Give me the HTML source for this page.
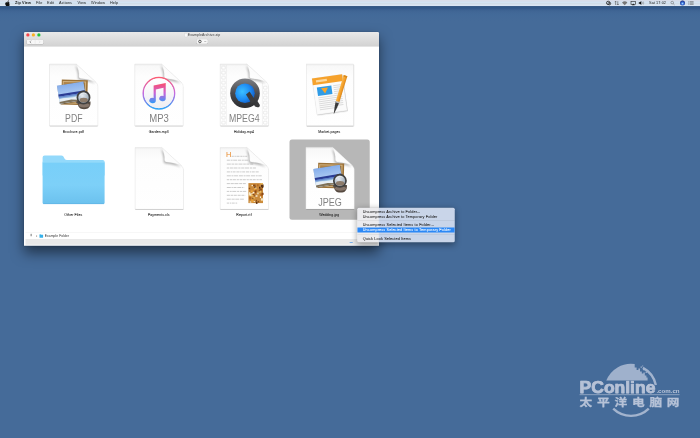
<!DOCTYPE html>
<html lang="en">
<head>
<meta charset="utf-8">
<title>Zip View</title>
<style>
html,body{margin:0;padding:0;width:700px;height:438px;overflow:hidden;background:#456b99;}
body{font-family:"Liberation Sans","Noto Sans CJK SC",sans-serif;}
#stage{position:absolute;left:0;top:0;width:2800px;height:1752px;transform:scale(.25);transform-origin:0 0;overflow:hidden;
 background:linear-gradient(#3a5b87 0px,#3a5b87 25px,#305786 29px,#34598a 34px,#3c6191 39px,#416796 47px,#436a99 60px,#456b99 84px,#456b99 100%);}
/* menu bar */
#menubar{position:absolute;left:0;top:0;width:2800px;height:24px;background:linear-gradient(#d9dde9 0,#d9dde9 3px,#d3e0ee 7px,#d4e3f2 10px,#d1dde8 14px,#d7e1ed 18px,#dae5f3 22px,#dae5f3 24px);}
#menubar span{position:absolute;top:0;line-height:23.5px;font-size:15.3px;letter-spacing:.3px;color:#222;white-space:nowrap;}
/* window */
#win{position:absolute;left:96px;top:128px;width:1420px;height:855px;background:#fff;border-radius:6px 6px 0 0;
 box-shadow:0 26px 50px rgba(0,0,0,.5),0 0 6px rgba(0,0,0,.3);overflow:hidden;}
#tb{position:absolute;left:0;top:0;width:100%;height:58px;background:linear-gradient(#e9e9e9,#d2d2d2);border-bottom:1px solid #b4b4b4;box-sizing:border-box;}
.tl{position:absolute;top:5px;width:13px;height:13px;border-radius:50%;}
#title{position:absolute;left:10px;top:3px;width:100%;text-align:center;font-size:14.2px;letter-spacing:.3px;color:#444;line-height:18px;}
.btn{position:absolute;background:#f7f7f7;border-radius:5px;box-shadow:0 0 0 1px rgba(0,0,0,.12),0 1px 1px rgba(0,0,0,.2);}
#pathbar{position:absolute;left:6px;top:801px;width:1408px;height:28px;background:#fff;border-top:1px solid #dcdcdc;box-sizing:border-box;font-size:13.3px;letter-spacing:.3px;color:#333;}
#status{position:absolute;left:6px;top:829px;width:1408px;height:22px;background:#e9e9e9;border-top:1px solid #d6d6d6;box-sizing:border-box;}
.lbl{position:absolute;width:320px;text-align:center;font-size:13.8px;letter-spacing:.4px;line-height:16px;color:#111;-webkit-text-stroke:.15px #111;white-space:nowrap;}
.sel{position:absolute;left:1062px;top:430px;width:321px;height:321px;background:#b7b7b7;border-radius:10px;}
#art{position:absolute;left:0;top:0;width:2800px;height:1752px;}
#art text{font-family:"Liberation Sans",sans-serif;}
/* context menu */
#menu{position:absolute;left:1429px;top:831px;width:390px;height:138px;background:linear-gradient(90deg,#ebebee 0,#ebebee 84px,#c9d5e9 90px,#c9d5e9 100%);border-radius:6px;
 box-shadow:0 8px 24px rgba(0,0,0,.35),0 0 2px rgba(0,0,0,.4);overflow:hidden;font-size:15.3px;letter-spacing:.45px;color:#1a1a1a;-webkit-text-stroke:.15px #1a1a1a;}
#menu div.it{position:absolute;left:0;width:100%;height:19px;line-height:19px;padding-left:22px;box-sizing:border-box;white-space:nowrap;}
#menu div.sp{position:absolute;left:0;width:100%;height:2px;background:rgba(0,0,0,.10);}
#menu div.hi{background:#2b88f6;color:#fff;-webkit-text-stroke:.15px #fff;}
</style>
</head>
<body>
<div id="stage">
 <div id="menubar">
  <span style="left:60px;font-weight:bold">Zip View</span>
  <span style="left:144px">File</span>
  <span style="left:188px">Edit</span>
  <span style="left:236px">Actions</span>
  <span style="left:310px">View</span>
  <span style="left:364px">Window</span>
  <span style="left:440px">Help</span>
  <span style="left:2596px">Sat 17:02</span>
 </div>
 <div id="win">
  <div id="tb">
   <div class="tl" style="left:9px;background:#f5454a"></div>
   <div class="tl" style="left:31px;background:#fbb024"></div>
   <div class="tl" style="left:53px;background:#22c23a"></div>
   <div id="title">ExampleArchive.zip</div>
   <div class="btn" style="left:11px;top:31px;width:67px;height:17px"></div>
   <div class="btn" style="left:690px;top:29px;width:45px;height:18px"></div>
  </div>
  <div class="sel"></div>
  <div class="lbl" style="left:37px;top:391px">Brochure.pdf</div>
  <div class="lbl" style="left:379px;top:391px">Garden.mp3</div>
  <div class="lbl" style="left:720px;top:391px">Holiday.mp4</div>
  <div class="lbl" style="left:1061px;top:391px">Market.pages</div>
  <div class="lbl" style="left:37px;top:723px">Other Files</div>
  <div class="lbl" style="left:379px;top:723px">Payments.xls</div>
  <div class="lbl" style="left:720px;top:723px">Report.rtf</div>
  <div class="lbl" style="left:1061px;top:723px">Wedding.jpg</div>
  <div id="pathbar"><span style="position:absolute;left:77px;top:5px">Example Folder</span></div>
  <div id="status"></div>
 </div>
 <svg id="art" viewBox="0 0 700 438" width="2800" height="1752">
<defs>
<filter id="ol" x="-5%" y="-20%" width="110%" height="140%"><feMorphology in="SourceAlpha" operator="dilate" radius=".45" result="d"/><feFlood flood-color="#456b99"/><feComposite in2="d" operator="in" result="o"/><feMerge><feMergeNode in="o"/><feMergeNode in="SourceGraphic"/></feMerge></filter>
<radialGradient id="siri" cx=".5" cy=".6" r=".6"><stop offset="0" stop-color="#9ad4ff"/><stop offset=".45" stop-color="#3a6fd8"/><stop offset="1" stop-color="#14206e"/></radialGradient>
<filter id="b1" x="-20%" y="-20%" width="140%" height="140%"><feGaussianBlur stdDeviation=".7"/></filter>
<filter id="b2" x="-30%" y="-30%" width="160%" height="160%"><feGaussianBlur stdDeviation="1.1"/></filter>
<filter id="b3" x="-30%" y="-30%" width="160%" height="160%"><feGaussianBlur stdDeviation=".35"/></filter>
<linearGradient id="pg" x1="0" y1="0" x2="0" y2="1"><stop offset="0" stop-color="#ececec"/><stop offset=".035" stop-color="#f8f8f8"/><stop offset=".2" stop-color="#fdfdfd"/><stop offset="1" stop-color="#ffffff"/></linearGradient>
<linearGradient id="fl" x1=".1" y1=".9" x2=".7" y2=".2"><stop offset="0" stop-color="#ffffff"/><stop offset=".6" stop-color="#fcfcfc"/><stop offset="1" stop-color="#f0f0f0"/></linearGradient>
<linearGradient id="sky" x1="0" y1="0" x2="0" y2="1"><stop offset="0" stop-color="#86aeeb"/><stop offset=".45" stop-color="#a3c3f0"/><stop offset="1" stop-color="#c4dcf6"/></linearGradient>
<linearGradient id="sea" x1="0" y1="0" x2="0" y2="1"><stop offset="0" stop-color="#4c6fc0"/><stop offset=".5" stop-color="#a8cdea"/><stop offset="1" stop-color="#d4e8f4"/></linearGradient>
<radialGradient id="glass" cx=".4" cy=".35" r=".8"><stop offset="0" stop-color="#e6ecf2"/><stop offset=".6" stop-color="#aab6c2"/><stop offset="1" stop-color="#80868e"/></radialGradient>
<linearGradient id="itr" x1="0" y1="0" x2="0" y2="1"><stop offset="0" stop-color="#fb5c74"/><stop offset=".5" stop-color="#c56ce0"/><stop offset="1" stop-color="#2fa6f6"/></linearGradient>
<linearGradient id="iti" x1="0" y1="0" x2="0" y2="1"><stop offset="0" stop-color="#ffffff"/><stop offset="1" stop-color="#eeeef2"/></linearGradient>
<linearGradient id="itn" x1="0" y1="0" x2="0" y2="1"><stop offset="0" stop-color="#fb4d6a"/><stop offset=".5" stop-color="#c963d8"/><stop offset="1" stop-color="#2f9bf8"/></linearGradient>
<linearGradient id="qtr" x1="0" y1="0" x2="0" y2="1"><stop offset="0" stop-color="#7d7f84"/><stop offset=".5" stop-color="#4a4b4f"/><stop offset="1" stop-color="#2c2c2e"/></linearGradient>
<radialGradient id="qtb" cx=".36" cy=".42" r=".75"><stop offset="0" stop-color="#3cc0ff"/><stop offset=".55" stop-color="#1e8cf4"/><stop offset="1" stop-color="#0f4fb8"/></radialGradient>
<linearGradient id="pen" x1="0" y1="0" x2="1" y2="0"><stop offset="0" stop-color="#f9b548"/><stop offset=".5" stop-color="#f6a22c"/><stop offset="1" stop-color="#d9861a"/></linearGradient>
<linearGradient id="fd" x1="0" y1="0" x2="0" y2="1"><stop offset="0" stop-color="#78cff9"/><stop offset=".55" stop-color="#7dd0f8"/><stop offset="1" stop-color="#6bc1ee"/></linearGradient>
</defs>
<g transform="translate(49.5,64.0)">
<path d="M0,0 H26.6 L46.6,18.4 Q48.4,20.2 48.4,22.8 V61.8 H0 Z" fill="#000" opacity=".12" filter="url(#b1)" transform="translate(0,.5)"/>
<rect x="0.4" y="61.2" width="47.6" height="1.1" fill="#000" opacity=".22" filter="url(#b3)"/>
<path d="M0,0 H26.6 L46.6,18.4 Q48.4,20.2 48.4,22.8 V61.8 H0 Z" fill="url(#pg)" stroke="#dcdcdc" stroke-width=".35"/>
<path d="M26.6,0 C28.6,3.6 29.8,9 29.4,12.4 Q29.4,14.4 31.4,14.6 C36,15 42.6,16.2 46.6,18.4 Z" fill="#000" opacity=".30" filter="url(#b2)" transform="translate(-.9,1.5)"/>
<path d="M26.6,0 C28.6,3.6 29.8,9 29.4,12.4 Q29.4,14.4 31.4,14.6 C36,15 42.6,16.2 46.6,18.4 Z" fill="url(#fl)" stroke="#dadada" stroke-width=".25"/>
<text x="15.6" y="58.45" font-size="10.5" fill="#828282" textLength="17.4" lengthAdjust="spacingAndGlyphs">PDF</text>
</g>
<g transform="translate(49.5,64.0)">
<g transform="rotate(1.5 25 28)"><rect x="12" y="15.9" width="26" height="25" fill="#9c7238"/><rect x="13" y="17.2" width="23.4" height="22.4" fill="#d2b482"/><rect x="14" y="18.2" width="21.4" height="20.4" fill="#b08448"/></g>
<g transform="translate(7.4,21.7) rotate(-9.2)">
 <rect x=".3" y=".5" width="26.85" height="18.6" fill="#000" opacity=".4" filter="url(#b1)"/>
 <rect x="0" y="0" width="26.85" height="18.4" fill="url(#sky)"/>
 <rect x="0" y="9" width="26.85" height="2.3" fill="#2b3c94"/>
 <rect x="0" y="11.2" width="26.85" height="5" fill="url(#sea)"/>
 <path d="M0,13.8 C6,12.4 12,15.4 18,13.6 L26.85,13.2 V18.4 H0 Z" fill="#e6eef4"/>
 <path d="M0,16.6 L12,16 L24,18.4 H0 Z" fill="#7d7058"/>
</g>
<path d="M28.2,37.6 C27.8,42.8 30.2,45.3 34.6,45.3 C39,45.3 41.4,42.8 41,37.6 Z" fill="#564a40"/>
<ellipse cx="34.6" cy="41.2" rx="5.8" ry="2.2" fill="#85756a"/><path d="M26.6,38.6 L29,36.6 L30,38 L27.6,39.8 Z" fill="#4a4a4a"/>
<circle cx="34.0" cy="33.5" r="6.1" fill="url(#glass)" stroke="#414141" stroke-width="1.7"/>
<path d="M30.2,31.7 A4.4,4.4 0 0 1 37,30.1" stroke="#fff" stroke-width=".9" fill="none" opacity=".6"/>
<ellipse cx="34.2" cy="36" rx="4.1" ry="2.3" fill="#8a7460" opacity=".9"/>
</g>
<g transform="translate(134.8,64.0)">
<path d="M0,0 H26.6 L46.6,18.4 Q48.4,20.2 48.4,22.8 V61.8 H0 Z" fill="#000" opacity=".12" filter="url(#b1)" transform="translate(0,.5)"/>
<rect x="0.4" y="61.2" width="47.6" height="1.1" fill="#000" opacity=".22" filter="url(#b3)"/>
<path d="M0,0 H26.6 L46.6,18.4 Q48.4,20.2 48.4,22.8 V61.8 H0 Z" fill="url(#pg)" stroke="#dcdcdc" stroke-width=".35"/>
<path d="M26.6,0 C28.6,3.6 29.8,9 29.4,12.4 Q29.4,14.4 31.4,14.6 C36,15 42.6,16.2 46.6,18.4 Z" fill="#000" opacity=".30" filter="url(#b2)" transform="translate(-.9,1.5)"/>
<path d="M26.6,0 C28.6,3.6 29.8,9 29.4,12.4 Q29.4,14.4 31.4,14.6 C36,15 42.6,16.2 46.6,18.4 Z" fill="url(#fl)" stroke="#dadada" stroke-width=".25"/>
<text x="14.4" y="58.45" font-size="10.5" fill="#828282" textLength="19.6" lengthAdjust="spacingAndGlyphs">MP3</text>
</g>
<g transform="translate(134.8,64.0)">
<circle cx="24.1" cy="29.3" r="15.7" fill="#fff" stroke="url(#itr)" stroke-width="1.5"/>
<circle cx="24.1" cy="29.3" r="14.8" fill="url(#iti)"/>
<g transform="translate(24.1,29.3) scale(1.1) translate(-24.4,-28.6)"><path d="M19.6,21.6 L30.6,19.2 V33.4 A3,2.5 0 1 1 28.6,31 V23.6 L21.6,25.1 V35.2 A3,2.5 0 1 1 19.6,32.8 Z" fill="url(#itn)"/></g>
</g>
<g transform="translate(220.2,64.0)">
<path d="M0,0 H26.6 L46.6,18.4 Q48.4,20.2 48.4,22.8 V61.8 H0 Z" fill="#000" opacity=".12" filter="url(#b1)" transform="translate(0,.5)"/>
<rect x="0.4" y="61.2" width="47.6" height="1.1" fill="#000" opacity=".22" filter="url(#b3)"/>
<path d="M0,0 H26.6 L46.6,18.4 Q48.4,20.2 48.4,22.8 V61.8 H0 Z" fill="url(#pg)" stroke="#dcdcdc" stroke-width=".35"/>
<rect x="1.6" y="2.2" width="3.4" height="2.9" rx=".5" fill="#fff" stroke="#d2d2d2" stroke-width=".4"/>
<rect x="1.6" y="7.2" width="3.4" height="2.9" rx=".5" fill="#fff" stroke="#d2d2d2" stroke-width=".4"/>
<rect x="1.6" y="12.2" width="3.4" height="2.9" rx=".5" fill="#fff" stroke="#d2d2d2" stroke-width=".4"/>
<rect x="1.6" y="17.2" width="3.4" height="2.9" rx=".5" fill="#fff" stroke="#d2d2d2" stroke-width=".4"/>
<rect x="1.6" y="22.2" width="3.4" height="2.9" rx=".5" fill="#fff" stroke="#d2d2d2" stroke-width=".4"/>
<rect x="43.4" y="22.2" width="3.4" height="2.9" rx=".5" fill="#fff" stroke="#d2d2d2" stroke-width=".4"/>
<rect x="1.6" y="27.2" width="3.4" height="2.9" rx=".5" fill="#fff" stroke="#d2d2d2" stroke-width=".4"/>
<rect x="43.4" y="27.2" width="3.4" height="2.9" rx=".5" fill="#fff" stroke="#d2d2d2" stroke-width=".4"/>
<rect x="1.6" y="32.2" width="3.4" height="2.9" rx=".5" fill="#fff" stroke="#d2d2d2" stroke-width=".4"/>
<rect x="43.4" y="32.2" width="3.4" height="2.9" rx=".5" fill="#fff" stroke="#d2d2d2" stroke-width=".4"/>
<rect x="1.6" y="37.2" width="3.4" height="2.9" rx=".5" fill="#fff" stroke="#d2d2d2" stroke-width=".4"/>
<rect x="43.4" y="37.2" width="3.4" height="2.9" rx=".5" fill="#fff" stroke="#d2d2d2" stroke-width=".4"/>
<rect x="1.6" y="42.2" width="3.4" height="2.9" rx=".5" fill="#fff" stroke="#d2d2d2" stroke-width=".4"/>
<rect x="43.4" y="42.2" width="3.4" height="2.9" rx=".5" fill="#fff" stroke="#d2d2d2" stroke-width=".4"/>
<rect x="1.6" y="47.2" width="3.4" height="2.9" rx=".5" fill="#fff" stroke="#d2d2d2" stroke-width=".4"/>
<rect x="43.4" y="47.2" width="3.4" height="2.9" rx=".5" fill="#fff" stroke="#d2d2d2" stroke-width=".4"/>
<rect x="1.6" y="52.2" width="3.4" height="2.9" rx=".5" fill="#fff" stroke="#d2d2d2" stroke-width=".4"/>
<rect x="43.4" y="52.2" width="3.4" height="2.9" rx=".5" fill="#fff" stroke="#d2d2d2" stroke-width=".4"/>
<rect x="1.6" y="57.2" width="3.4" height="2.9" rx=".5" fill="#fff" stroke="#d2d2d2" stroke-width=".4"/>
<rect x="43.4" y="57.2" width="3.4" height="2.9" rx=".5" fill="#fff" stroke="#d2d2d2" stroke-width=".4"/>
<path d="M6.2,1 V61 M42.2,19 V61" stroke="#dcdcdc" stroke-width=".35" fill="none"/>
<path d="M26.6,0 C28.6,3.6 29.8,9 29.4,12.4 Q29.4,14.4 31.4,14.6 C36,15 42.6,16.2 46.6,18.4 Z" fill="#000" opacity=".30" filter="url(#b2)" transform="translate(-.9,1.5)"/>
<path d="M26.6,0 C28.6,3.6 29.8,9 29.4,12.4 Q29.4,14.4 31.4,14.6 C36,15 42.6,16.2 46.6,18.4 Z" fill="url(#fl)" stroke="#dadada" stroke-width=".25"/>
<text x="8.8" y="58.45" font-size="10.5" fill="#828282" textLength="30.6" lengthAdjust="spacingAndGlyphs">MPEG4</text>
</g>
<g transform="translate(221.0,64.0)">
<path d="M28,33 L31.6,29.6 L38.6,40.6 C39.4,42 38,43.6 36.4,43.2 L34,42.4 Z" fill="#3a3a3c"/>
<circle cx="24" cy="29.2" r="14.8" fill="url(#qtr)"/>
<circle cx="24" cy="29.2" r="9.8" fill="url(#qtb)"/>
<path d="M25,30.6 L28.6,27.4 L34.4,36.4 L30.6,39.4 Z" fill="#3c3c3e"/>
</g>
<g transform="translate(306.3,64.0)">
<rect x="0.3" y="0.8" width="47.6" height="61.6" fill="#000" opacity=".14" filter="url(#b1)"/>
<rect x="0.4" y="61.3" width="46.6" height="1.1" fill="#000" opacity=".25" filter="url(#b3)"/>
<rect x="0" y="0" width="47.3" height="61.8" fill="url(#pg)" stroke="#dedede" stroke-width=".35"/>
</g>
<g transform="translate(306.3,64.0)">
<g transform="translate(0,-.8) rotate(-8 24 31)">
 <rect x="8.4" y="13.6" width="30.4" height="36.6" fill="#000" opacity=".25" filter="url(#b1)"/>
 <rect x="8" y="13" width="30.4" height="36.4" fill="#fbfbfb" stroke="#dedede" stroke-width=".3"/>
 <rect x="8" y="13" width="30.4" height="6.6" fill="#f6a22c"/>
 <rect x="11.6" y="15.2" width="11" height="2.2" fill="#fbd9a0"/>
 <rect x="11.6" y="22.4" width="14.6" height="8.6" fill="#2f9be6"/>
 <path d="M15.6,23.8 L22.6,24 L19,29.6 Z" fill="#f7a52a"/>
 <path d="M28,23 H35.6 M28,25 H35.6 M28,27 H35.6 M28,29 H35.6 M28,31 H35.6 M11.6,33 H35.6 M11.6,35 H35.6 M11.6,37 H35.6 M11.6,39 H35.6 M11.6,41 H35.6 M11.6,43 H35.6 M11.6,45 H30" stroke="#cfcfcf" stroke-width=".7"/>
</g>
<g transform="rotate(17 33 31)">
 <rect x="31.4" y="10.6" width="3.8" height="28" rx=".6" fill="url(#pen)"/>
 <rect x="31.4" y="10.6" width="3.8" height="1.6" fill="#d98a1c"/>
 <path d="M31.4,38.4 H35.2 L34.4,45 L33.3,51 L32.2,45 Z" fill="#3a3a3a"/>
 <rect x="31.2" y="37.6" width="4.2" height="1.6" fill="#bdbdbd"/>
</g>
</g>
<g transform="translate(42.6,155.5)">
<path d="M0,2 Q0,0 2,0 H18.6 Q20,0 20.8,1 L22.2,3.6 Q22.9,4.6 24.4,4.6 H60 Q62,4.6 62,6.6 V20 H0 Z" fill="#93d9fb"/>
<rect x="0" y="6.2" width="62" height="42.4" rx="1.4" fill="url(#fd)"/>
<rect x="0" y="6.2" width="62" height=".7" fill="#a6e0fb"/>
<rect x="0.6" y="47.9" width="60.8" height=".7" fill="#5fb4e4"/>
</g>
<g transform="translate(135.10000000000002,147.5)">
<path d="M0,0 H26.6 L46.6,18.4 Q48.4,20.2 48.4,22.8 V61.8 H0 Z" fill="#000" opacity=".12" filter="url(#b1)" transform="translate(0,.5)"/>
<rect x="0.4" y="61.2" width="47.6" height="1.1" fill="#000" opacity=".22" filter="url(#b3)"/>
<path d="M0,0 H26.6 L46.6,18.4 Q48.4,20.2 48.4,22.8 V61.8 H0 Z" fill="url(#pg)" stroke="#dcdcdc" stroke-width=".35"/>
<path d="M26.6,0 C28.6,3.6 29.8,9 29.4,12.4 Q29.4,14.4 31.4,14.6 C36,15 42.6,16.2 46.6,18.4 Z" fill="#000" opacity=".30" filter="url(#b2)" transform="translate(-.9,1.5)"/>
<path d="M26.6,0 C28.6,3.6 29.8,9 29.4,12.4 Q29.4,14.4 31.4,14.6 C36,15 42.6,16.2 46.6,18.4 Z" fill="url(#fl)" stroke="#dadada" stroke-width=".25"/>
</g>
<g transform="translate(220.2,147.5)">
<path d="M0,0 H26.6 L46.6,18.4 Q48.4,20.2 48.4,22.8 V61.8 H0 Z" fill="#000" opacity=".12" filter="url(#b1)" transform="translate(0,.5)"/>
<rect x="0.4" y="61.2" width="47.6" height="1.1" fill="#000" opacity=".22" filter="url(#b3)"/>
<path d="M0,0 H26.6 L46.6,18.4 Q48.4,20.2 48.4,22.8 V61.8 H0 Z" fill="url(#pg)" stroke="#dcdcdc" stroke-width=".35"/>
<path d="M26.6,0 C28.6,3.6 29.8,9 29.4,12.4 Q29.4,14.4 31.4,14.6 C36,15 42.6,16.2 46.6,18.4 Z" fill="#000" opacity=".30" filter="url(#b2)" transform="translate(-.9,1.5)"/>
<path d="M26.6,0 C28.6,3.6 29.8,9 29.4,12.4 Q29.4,14.4 31.4,14.6 C36,15 42.6,16.2 46.6,18.4 Z" fill="url(#fl)" stroke="#dadada" stroke-width=".25"/>
</g>
<g transform="translate(220.2,147.5)">
<text x="5.8" y="9.7" font-size="7.4" font-family="'Liberation Serif',serif" fill="#e8892a">H</text>
<path d="M11.4,8.8 H27" stroke="#8e8e8e" stroke-width=".9" stroke-dasharray="2.2 .7 1.4 .6 3.0 .8" opacity=".5" fill="none"/>
<path d="M6.6,12.7 H29.5" stroke="#8e8e8e" stroke-width=".9" stroke-dasharray="3.1 .7 2.0 .6 4.0 .8" opacity=".5" fill="none"/>
<path d="M6.6,16.6 H33" stroke="#8e8e8e" stroke-width=".9" stroke-dasharray="4.0 .7 2.6 .6 3.0 .8" opacity=".5" fill="none"/>
<path d="M6.6,20.5 H36" stroke="#8e8e8e" stroke-width=".9" stroke-dasharray="2.2 .7 3.2 .6 4.0 .8" opacity=".5" fill="none"/>
<path d="M6.6,24.4 H39" stroke="#8e8e8e" stroke-width=".9" stroke-dasharray="3.1 .7 1.4 .6 3.0 .8" opacity=".5" fill="none"/>
<path d="M6.6,28.3 H41.5" stroke="#8e8e8e" stroke-width=".9" stroke-dasharray="4.0 .7 2.0 .6 4.0 .8" opacity=".5" fill="none"/>
<path d="M6.6,32.2 H42" stroke="#8e8e8e" stroke-width=".9" stroke-dasharray="2.2 .7 2.6 .6 3.0 .8" opacity=".5" fill="none"/>
<path d="M6.6,36.1 H25.6" stroke="#8e8e8e" stroke-width=".9" stroke-dasharray="3.1 .7 3.2 .6 4.0 .8" opacity=".5" fill="none"/>
<path d="M6.6,40.0 H24" stroke="#8e8e8e" stroke-width=".9" stroke-dasharray="4.0 .7 1.4 .6 3.0 .8" opacity=".5" fill="none"/>
<path d="M6.6,43.9 H26" stroke="#8e8e8e" stroke-width=".9" stroke-dasharray="2.2 .7 2.0 .6 4.0 .8" opacity=".5" fill="none"/>
<path d="M6.6,47.8 H25" stroke="#8e8e8e" stroke-width=".9" stroke-dasharray="3.1 .7 2.6 .6 3.0 .8" opacity=".5" fill="none"/>
<path d="M6.6,51.7 H23.6" stroke="#8e8e8e" stroke-width=".9" stroke-dasharray="4.0 .7 3.2 .6 4.0 .8" opacity=".5" fill="none"/>
<path d="M6.6,55.6 H17" stroke="#8e8e8e" stroke-width=".9" stroke-dasharray="2.2 .7 1.4 .6 3.0 .8" opacity=".5" fill="none"/>
<rect x="28.2" y="35.6" width="14.6" height="20" fill="#c98a3c"/>
<rect x="31.3" y="37.5" width="1.6" height="1.2" fill="#f3e6c8"/>
<rect x="28.5" y="45.8" width="1.5" height="2.6" fill="#f3e6c8"/>
<rect x="31.1" y="45.6" width="1.4" height="1.3" fill="#f3e6c8"/>
<rect x="31.7" y="53.1" width="1.0" height="2.0" fill="#e9a23a"/>
<rect x="38.8" y="39.2" width="1.5" height="2.0" fill="#5a3010"/>
<rect x="40.9" y="51.4" width="1.6" height="2.4" fill="#e9a23a"/>
<rect x="37.1" y="45.0" width="1.3" height="1.8" fill="#f3e6c8"/>
<rect x="40.7" y="50.8" width="2.5" height="2.3" fill="#f3e6c8"/>
<rect x="40.2" y="46.2" width="2.4" height="2.4" fill="#b5651d"/>
<rect x="30.8" y="43.5" width="1.5" height="1.7" fill="#8a4a18"/>
<rect x="32.2" y="50.7" width="1.1" height="1.1" fill="#5a3010"/>
<rect x="41.4" y="45.3" width="2.0" height="2.1" fill="#8a4a18"/>
<rect x="41.4" y="39.2" width="1.7" height="1.3" fill="#5a3010"/>
<rect x="34.0" y="39.0" width="1.7" height="1.9" fill="#5a3010"/>
<rect x="35.6" y="52.4" width="1.2" height="1.1" fill="#8a4a18"/>
<rect x="31.9" y="46.4" width="2.4" height="1.2" fill="#8a4a18"/>
<rect x="32.0" y="36.1" width="1.6" height="1.1" fill="#e9a23a"/>
<rect x="37.9" y="53.5" width="1.0" height="1.5" fill="#8a4a18"/>
<rect x="38.4" y="43.2" width="2.5" height="2.0" fill="#f0c060"/>
<rect x="29.2" y="47.1" width="2.4" height="1.5" fill="#e9a23a"/>
<rect x="33.2" y="53.5" width="1.5" height="1.0" fill="#f3e6c8"/>
<rect x="34.2" y="42.4" width="2.3" height="2.6" fill="#b5651d"/>
<rect x="29.5" y="53.9" width="1.7" height="1.3" fill="#f3e6c8"/>
<rect x="29.0" y="49.3" width="2.0" height="2.6" fill="#b5651d"/>
<rect x="28.7" y="44.7" width="1.4" height="2.6" fill="#f3e6c8"/>
<rect x="39.2" y="41.0" width="2.6" height="2.0" fill="#8a4a18"/>
<rect x="34.5" y="40.1" width="1.7" height="1.1" fill="#fff3dc"/>
<rect x="34.1" y="47.6" width="1.7" height="1.3" fill="#8a4a18"/>
<rect x="28.6" y="40.3" width="1.4" height="1.3" fill="#8a4a18"/>
<rect x="33.7" y="40.5" width="1.5" height="2.4" fill="#e9a23a"/>
<rect x="35.7" y="54.0" width="1.6" height="2.4" fill="#5a3010"/>
<rect x="39.7" y="48.9" width="1.1" height="1.6" fill="#fff3dc"/>
<rect x="31.0" y="51.9" width="2.4" height="2.5" fill="#e9a23a"/>
<rect x="32.1" y="44.4" width="2.4" height="1.5" fill="#fff3dc"/>
<rect x="35.2" y="47.8" width="2.1" height="1.4" fill="#fff3dc"/>
<rect x="40.8" y="37.0" width="2.6" height="2.5" fill="#5a3010"/>
<rect x="30.7" y="42.9" width="2.0" height="2.2" fill="#e9a23a"/>
<rect x="37.0" y="36.7" width="1.3" height="2.0" fill="#b5651d"/>
<rect x="34.4" y="43.1" width="1.6" height="2.3" fill="#8a4a18"/>
<rect x="40.4" y="35.8" width="2.4" height="1.2" fill="#f0c060"/>
<rect x="38.4" y="42.7" width="1.4" height="1.1" fill="#8a4a18"/>
<rect x="30.3" y="46.9" width="2.3" height="1.9" fill="#f0c060"/>
<rect x="34.4" y="45.4" width="1.0" height="1.1" fill="#b5651d"/>
<rect x="29.7" y="46.0" width="1.4" height="2.2" fill="#f3e6c8"/>
<rect x="33.0" y="49.9" width="1.8" height="1.0" fill="#f0c060"/>
<rect x="32.8" y="37.0" width="2.5" height="1.7" fill="#8a4a18"/>
</g>
<g transform="translate(305.9,147.3)">
<path d="M0,0 H26.6 L46.6,18.4 Q48.4,20.2 48.4,22.8 V61.8 H0 Z" fill="#000" opacity=".12" filter="url(#b1)" transform="translate(0,.5)"/>
<rect x="0.4" y="61.2" width="47.6" height="1.1" fill="#000" opacity=".22" filter="url(#b3)"/>
<path d="M0,0 H26.6 L46.6,18.4 Q48.4,20.2 48.4,22.8 V61.8 H0 Z" fill="url(#pg)" stroke="#dcdcdc" stroke-width=".35"/>
<path d="M26.6,0 C28.6,3.6 29.8,9 29.4,12.4 Q29.4,14.4 31.4,14.6 C36,15 42.6,16.2 46.6,18.4 Z" fill="#000" opacity=".30" filter="url(#b2)" transform="translate(-.9,1.5)"/>
<path d="M26.6,0 C28.6,3.6 29.8,9 29.4,12.4 Q29.4,14.4 31.4,14.6 C36,15 42.6,16.2 46.6,18.4 Z" fill="url(#fl)" stroke="#dadada" stroke-width=".25"/>
<text x="12.4" y="58.45" font-size="10.5" fill="#828282" textLength="23.6" lengthAdjust="spacingAndGlyphs">JPEG</text>
</g>
<g transform="translate(305.9,147.3)">
<g transform="rotate(1.5 25 28)"><rect x="12" y="15.9" width="26" height="25" fill="#9c7238"/><rect x="13" y="17.2" width="23.4" height="22.4" fill="#d2b482"/><rect x="14" y="18.2" width="21.4" height="20.4" fill="#b08448"/></g>
<g transform="translate(7.4,21.7) rotate(-9.2)">
 <rect x=".3" y=".5" width="26.85" height="18.6" fill="#000" opacity=".4" filter="url(#b1)"/>
 <rect x="0" y="0" width="26.85" height="18.4" fill="url(#sky)"/>
 <rect x="0" y="9" width="26.85" height="2.3" fill="#2b3c94"/>
 <rect x="0" y="11.2" width="26.85" height="5" fill="url(#sea)"/>
 <path d="M0,13.8 C6,12.4 12,15.4 18,13.6 L26.85,13.2 V18.4 H0 Z" fill="#e6eef4"/>
 <path d="M0,16.6 L12,16 L24,18.4 H0 Z" fill="#7d7058"/>
</g>
<path d="M28.2,37.6 C27.8,42.8 30.2,45.3 34.6,45.3 C39,45.3 41.4,42.8 41,37.6 Z" fill="#564a40"/>
<ellipse cx="34.6" cy="41.2" rx="5.8" ry="2.2" fill="#85756a"/><path d="M26.6,38.6 L29,36.6 L30,38 L27.6,39.8 Z" fill="#4a4a4a"/>
<circle cx="34.0" cy="33.5" r="6.1" fill="url(#glass)" stroke="#414141" stroke-width="1.7"/>
<path d="M30.2,31.7 A4.4,4.4 0 0 1 37,30.1" stroke="#fff" stroke-width=".9" fill="none" opacity=".6"/>
<ellipse cx="34.2" cy="36" rx="4.1" ry="2.3" fill="#8a7460" opacity=".9"/>
</g>
<g id="wb">
<path d="M31.1,40.6 L29.9,41.9 L31.1,43.2" stroke="#666" stroke-width=".6" fill="none"/>
<path d="M39.0,40.6 L40.2,41.9 L39.0,43.2" stroke="#d4d4d4" stroke-width=".55" fill="none"/>
<rect x="34.9" y="39.9" width=".3" height="4.1" fill="#d8d8d8"/>
<circle cx="199.9" cy="41.5" r="1.25" fill="none" stroke="#555" stroke-width="1.0"/>
<path d="M204.4,41.1 L205.3,42.0 L206.2,41.1" stroke="#666" stroke-width=".45" fill="none"/>
<path d="M184.7,33.2 H186.4 L187.3,34.1 V36.9 H184.7 Z" fill="#fbfbfb" stroke="#bdbdbd" stroke-width=".3"/>
<rect x="30.7" y="233.7" width=".8" height="2.6" rx=".3" fill="#555"/>
<path d="M36.2,235.3 L37.4,236.1 L36.2,236.9 Z" fill="#8a8078"/>
<rect x="39.5" y="234.7" width="3.6" height="3.1" rx=".3" fill="#35b1ea"/><rect x="39.5" y="234.4" width="1.6" height=".8" rx=".2" fill="#35b1ea"/>
<rect x="349.6" y="242.0" width="3.2" height=".8" rx=".3" fill="#5aa0ee"/>
</g>
<g id="mbi">
<path d="M8.9,1.1 C8.9,1.9 8.3,2.6 7.5,2.6 C7.4,1.8 8.1,1.1 8.9,1.1 Z M9.6,3.3 C9.1,2.7 8.3,2.6 7.9,2.8 C7.5,2.9 7.2,2.9 6.8,2.8 C5.9,2.5 5.2,3.3 5.2,4.3 C5.2,5.4 6.0,6.7 6.7,6.7 C7.0,6.7 7.2,6.5 7.6,6.5 C8.0,6.5 8.1,6.7 8.5,6.7 C9.1,6.7 9.6,5.8 9.8,5.3 C9.2,5.0 9.0,3.9 9.6,3.3 Z" fill="#111" transform="translate(0,-0.6)"/>
<circle cx="608.2" cy="2.9" r="1.7" fill="none" stroke="#222" stroke-width=".8"/><circle cx="609.4" cy="3.6" r="1.3" fill="none" stroke="#222" stroke-width=".7"/>
<path d="M615.6,1.2 V5 M614.6,2.2 L615.6,1.2 L616.6,2.2 M617.8,1.2 V5 M616.8,4 L617.8,5 L618.8,4" stroke="#555" stroke-width=".6" fill="none"/>
<path d="M622,2.4 Q624.7,0.2 627.4,2.4 L624.7,5.2 Z" fill="#777"/>
<rect x="631" y="1.3" width="4.6" height="3" fill="none" stroke="#222" stroke-width=".6"/><path d="M631.9,5.2 L633.3,3.6 L634.7,5.2 Z" fill="#222"/>
<path d="M638.8,2.3 H639.9 L641.3,1.1 V4.9 L639.9,3.7 H638.8 Z" fill="#111"/><path d="M642.2,2 Q642.9,3 642.2,4 M643.2,1.4 Q644.4,3 643.2,4.6" stroke="#777" stroke-width=".45" fill="none"/>
<circle cx="672.2" cy="2.6" r="1.3" fill="none" stroke="#666" stroke-width=".55"/><path d="M673.2,3.6 L674.5,4.9" stroke="#666" stroke-width=".6"/>
<circle cx="682.5" cy="3" r="2.5" fill="url(#siri)"/>
<path d="M689.6,1.7 H693.6 M689.6,3 H693.6 M689.6,4.3 H693.6" stroke="#555" stroke-width=".6"/><path d="M688.4,1.7 h.6 M688.4,3 h.6 M688.4,4.3 h.6" stroke="#555" stroke-width=".6"/>
</g>
<g id="wm">
<path d="M606.17,380.77 A26.6,26.6 0 0 1 634.70,363.96 V367.6 H636.6 V370 H638.4 V368.6 H640 V371.6 H641.8 V373.6 H643.4 V372.4 H644.8 V375.6 H646.4 V377.6 H647.6 V380.6 H606.17 Z" fill="#9fb1cc"/>
<path d="M640.6,366.4 h1.3 v1.3 h-1.3z M643,369 h1.3 v1.3 h-1.3z M645.6,371.6 h1.3 v1.3 h-1.3z M642.2,365.6 h1 v1 h-1z" fill="#9fb1cc"/>
<path d="M642.92,367.87 A25.400000000000002,25.400000000000002 0 0 1 655.84,385.02" fill="none" stroke="#a3b4ce" stroke-width="2.4"/>
<path d="M650.61,406.76 A25.6,25.6 0 0 1 610.83,406.06" fill="none" stroke="#a3b4ce" stroke-width="2.0" transform="rotate(180 631.0 390.3) scale(1 1)" opacity="0"/>
<path d="M613.22,408.72 A25.6,25.6 0 0 0 648.78,408.72" fill="none" stroke="#a3b4ce" stroke-width="2.4"/>
<text x="579.6" y="393.1" font-size="17.2" font-weight="bold" fill="#b6c2d7" stroke="#b6c2d7" stroke-width=".75" stroke-linejoin="round" textLength="75.8" lengthAdjust="spacingAndGlyphs" filter="url(#ol)">PConline</text>
<text x="656.4" y="393.1" font-size="5.6" font-weight="bold" fill="#b9c5d9" textLength="23.2" lengthAdjust="spacingAndGlyphs">.com.cn</text>
<rect x="579.6" y="394.5" width="100" height=".6" fill="#b9c5d9"/>
<g transform="translate(579.6,405.5) scale(1.27,1)"><text x="0" y="0" font-size="10" font-weight="bold" fill="#b6c2d7" stroke="#b6c2d7" stroke-width=".25" letter-spacing="3.75" style="font-family:'Noto Sans CJK SC','WenQuanYi Zen Hei',sans-serif">太平洋电脑网</text></g>
</g>

 </svg>
 <div id="menu">
  <div class="it" style="top:4px">Uncompress Archive to Folder...</div>
  <div class="it" style="top:25px">Uncompress Archive to Temporary Folder</div>
  <div class="sp" style="top:49px"></div>
  <div class="it" style="top:59px">Uncompress Selected Items to Folder...</div>
  <div class="it hi" style="top:79px;height:20px;line-height:20px">Uncompress Selected Items to Temporary Folder</div>
  <div class="sp" style="top:105px"></div>
  <div class="it" style="top:112px">Quick Look Selected Items</div>
 </div>
</div>
</body>
</html>
